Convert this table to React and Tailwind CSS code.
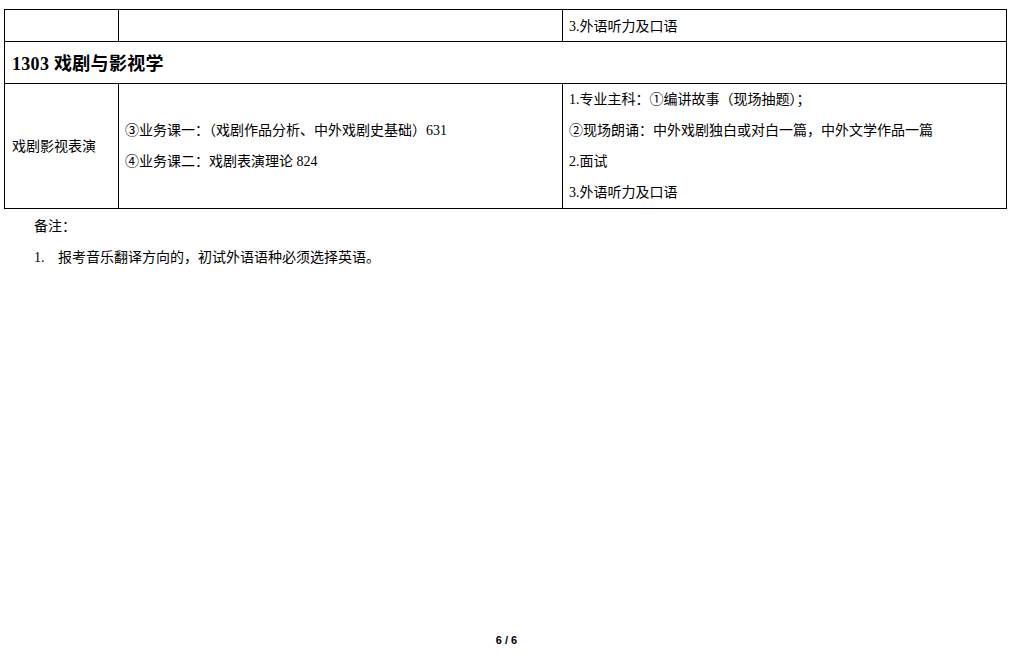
export default function App() {
  const font = { fontFamily: '"Liberation Serif", "Noto Sans CJK SC", serif' };
  return (
    <div className="w-[1013px] h-[661px] bg-white text-black relative" style={font}>
      <div className="pt-[9px] pl-[4px]">
        <div className="w-[1003px] border border-black text-[14px]">
          {/* Row 1 */}
          <div className="grid grid-cols-[114px_444px_1fr] h-[32px] border-b border-black">
            <div className="border-r border-black" />
            <div className="border-r border-black" />
            <div className="flex items-center pl-[6px] pt-px leading-[31px]">3.外语听力及口语</div>
          </div>
          {/* Header */}
          <div className="h-[42px] border-b border-black flex items-center pl-[7px] pt-[3px]">
            <span className="text-[18px] font-bold tracking-[0.3px]">1303 戏剧与影视学</span>
          </div>
          {/* Row 3 */}
          <div className="grid grid-cols-[114px_444px_1fr] h-[124px]">
            <div className="border-r border-black flex items-center pl-[7px]">戏剧影视表演</div>
            <div className="border-r border-black flex flex-col justify-center pl-[6px] leading-[31px]">
              <div>③业务课一：（戏剧作品分析、中外戏剧史基础）631</div>
              <div>④业务课二：戏剧表演理论 824</div>
            </div>
            <div className="flex flex-col justify-center pl-[6px] leading-[31px]">
              <div>1.专业主科：①编讲故事（现场抽题）；</div>
              <div>②现场朗诵：中外戏剧独白或对白一篇，中外文学作品一篇</div>
              <div>2.面试</div>
              <div>3.外语听力及口语</div>
            </div>
          </div>
        </div>
        <div className="pl-[30px] text-[14px] leading-[31px] mt-[2px]">
          <div>备注：</div>
          <div className="flex">
            <span className="w-[24px]">1.</span>
            <span>报考音乐翻译方向的，初试外语语种必须选择英语。</span>
          </div>
        </div>
      </div>
      <div
        className="absolute left-0 right-0 top-[632px] text-center text-[11px] font-bold"
        style={{ fontFamily: '"Liberation Sans", sans-serif' }}
      >
        6 / 6
      </div>
    </div>
  );
}
